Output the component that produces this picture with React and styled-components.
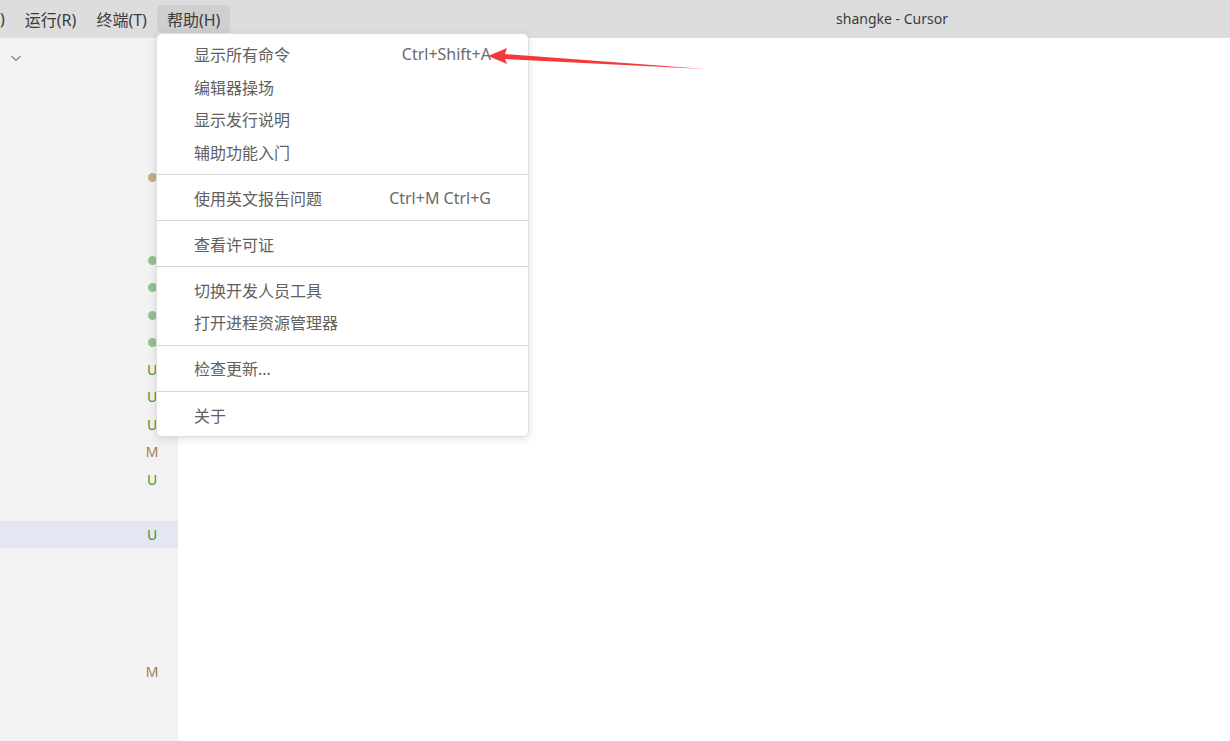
import React from "react";
import styled, { createGlobalStyle } from "styled-components";

const GlobalStyle = createGlobalStyle`
  html, body {
    margin: 0;
    padding: 0;
    background: #ffffff;
    font-family: "Noto Sans", "Noto Sans CJK SC", sans-serif;
  }
  * { box-sizing: border-box; }
`;

const Window = styled.div`
  position: relative;
  width: 1230px;
  height: 741px;
  overflow: hidden;
  display: flex;
  flex-direction: column;
`;

const TitleBar = styled.header`
  height: 38px;
  background: #dddddd;
  display: flex;
  align-items: center;
  position: relative;
`;

const MenuBar = styled.nav`
  display: flex;
  align-items: center;
  height: 100%;
`;

const MenuItem = styled.div`
  height: 28px;
  padding: 0 10px;
  padding-left: ${(p) => (p.$first ? "0" : "10px")};
  display: flex;
  align-items: center;
  font-size: 16px;
  color: #3b3b3b;
  border-radius: 5px;
  background: ${(p) => (p.$active ? "#cfcfcf" : "transparent")};
`;

const WindowTitle = styled.div`
  position: absolute;
  left: 0;
  right: 0;
  top: 0;
  height: 37px;
  display: flex;
  align-items: center;
  justify-content: center;
  padding-left: 554px;
  font-size: 14px;
  color: #3b3b3b;
  pointer-events: none;
`;

const Body = styled.div`
  flex: 1;
  display: flex;
`;

const Sidebar = styled.aside`
  width: 178px;
  background: #f2f2f2;
  display: flex;
  flex-direction: column;
`;

const SideHeader = styled.div`
  height: 40px;
  display: flex;
  align-items: center;
  padding-left: 9px;
  color: #7478a0;
`;

const RowList = styled.div`
  margin-top: 85px;
  display: flex;
  flex-direction: column;
`;

const Row = styled.div`
  height: 27.5px;
  display: flex;
  align-items: center;
  justify-content: flex-end;
  padding-right: 19px;
  background: ${(p) => (p.$selected ? "#e4e6f1" : "transparent")};
`;

const Dot = styled.span`
  width: 9px;
  height: 9px;
  border-radius: 50%;
  margin-right: 2px;
  margin-top: 2px;
  background: ${(p) => p.$color};
`;

const Badge = styled.span`
  width: 14px;
  text-align: center;
  font-size: 14px;
  color: ${(p) => (p.$kind === "M" ? "#a57c45" : "#3c963c")};
`;

const Editor = styled.main`
  flex: 1;
  background: #ffffff;
`;

const DropMenu = styled.div`
  position: absolute;
  left: 156px;
  top: 33px;
  width: 373px;
  padding: 4px 0 5px;
  background: #ffffff;
  border: 1px solid #dedede;
  border-radius: 6px;
  box-shadow: 0 2px 8px rgba(0, 0, 0, 0.12);
  display: flex;
  flex-direction: column;
`;

const Entry = styled.div`
  height: 32.45px;
  display: flex;
  align-items: center;
  justify-content: space-between;
  padding: 0 37px;
  font-size: 16px;
  color: #616161;
`;

const Shortcut = styled.span`
  font-size: 16px;
  color: #6a6a6a;
`;

const Separator = styled.div`
  height: 13.7px;
  display: flex;
  align-items: center;
  &::after {
    content: "";
    flex: 1;
    height: 1px;
    background: #d6d6d6;
  }
`;

const Arrow = styled.svg`
  position: absolute;
  left: 480px;
  top: 45px;
  overflow: visible;
`;

const rows = [
  { dot: "#c8ab86" },
  {},
  {},
  { dot: "#93c193" },
  { dot: "#93c193" },
  { dot: "#93c193" },
  { dot: "#93c193" },
  { badge: "U" },
  { badge: "U" },
  { badge: "U" },
  { badge: "M" },
  { badge: "U" },
  {},
  { badge: "U", selected: true },
  {},
  {},
  {},
  {},
  { badge: "M" },
];

const groups = [
  [
    ["显示所有命令", "Ctrl+Shift+A"],
    ["编辑器操场"],
    ["显示发行说明"],
    ["辅助功能入门"],
  ],
  [["使用英文报告问题", "Ctrl+M Ctrl+G"]],
  [["查看许可证"]],
  [["切换开发人员工具"], ["打开进程资源管理器"]],
  [["检查更新..."]],
  [["关于"]],
];

function ChevronDown() {
  return (
    <svg width="14" height="14" viewBox="0 0 14 14" fill="none">
      <path d="M2.5 5 L7 9.5 L11.5 5" stroke="currentColor" strokeWidth="1.1" />
    </svg>
  );
}

export default function App() {
  return (
    <Window>
      <GlobalStyle />
      <TitleBar>
        <MenuBar>
          <MenuItem $first>)</MenuItem>
          <MenuItem>运行(R)</MenuItem>
          <MenuItem>终端(T)</MenuItem>
          <MenuItem $active>帮助(H)</MenuItem>
        </MenuBar>
        <WindowTitle>shangke - Cursor</WindowTitle>
      </TitleBar>
      <Body>
        <Sidebar>
          <SideHeader>
            <ChevronDown />
          </SideHeader>
          <RowList>
            {rows.map((r, i) => (
              <Row key={i} $selected={r.selected}>
                {r.dot && <Dot $color={r.dot} />}
                {r.badge && <Badge $kind={r.badge}>{r.badge}</Badge>}
              </Row>
            ))}
          </RowList>
        </Sidebar>
        <Editor />
      </Body>
      <DropMenu>
        {groups.map((g, gi) => (
          <React.Fragment key={gi}>
            {gi > 0 && <Separator />}
            {g.map(([label, key]) => (
              <Entry key={label}>
                <span>{label}</span>
                {key && <Shortcut>{key}</Shortcut>}
              </Entry>
            ))}
          </React.Fragment>
        ))}
      </DropMenu>
      <Arrow width="230" height="30" viewBox="0 0 230 30">
        <path d="M8 11 L27 3 L25 9 L225 24 L25 14 L27 19 Z" fill="#f23a3a" />
      </Arrow>
    </Window>
  );
}
